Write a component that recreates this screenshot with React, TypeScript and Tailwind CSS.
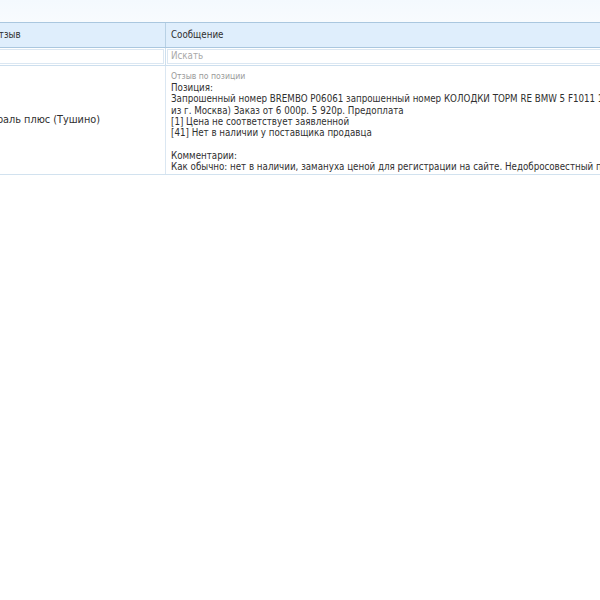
import React from "react";

const font = { fontFamily: '"DejaVu Sans Condensed", "DejaVu Sans", sans-serif' };

export default function App() {
  return (
    <div
      className="w-[600px] h-[600px] bg-white overflow-hidden text-[9.7px] text-[#2f2f2f]"
      style={font}
    >
      <div className="h-[22px] bg-gradient-to-b from-[#f4f9fe] to-[#f8fbfe]" />
      <div className="ml-[-12px] w-[1000px]">
        {/* header */}
        <div className="flex h-[26px] bg-[#dfeefc] border-t border-b border-[#aac7df]">
          <div className="w-[178px] shrink-0 border-r border-[#b8d1e5] flex items-center pl-[4px]">
            Отзыв
          </div>
          <div className="flex-1 flex items-center pl-[5px]">Сообщение</div>
        </div>
        {/* filter */}
        <div className="flex h-[18px] bg-white border-b border-[#cddfee]">
          <div className="w-[178px] shrink-0 border-r border-[#cddfee] p-[1px]">
            <div className="h-full border border-[#dbe7f2]" />
          </div>
          <div className="flex-1 p-[1px]">
            <div className="h-full border border-[#dbe7f2] flex items-center pl-[3px] text-[#a8a8a8]">
              Искать
            </div>
          </div>
        </div>
        {/* row */}
        <div className="flex border-b border-[#d2e2ef]">
          <div className="w-[178px] shrink-0 border-r border-[#dbe7f2] flex items-center justify-end pr-[65px] overflow-hidden whitespace-nowrap text-[10.8px]">
            <span>Автоцентраль плюс (Тушино)</span>
          </div>
          <div className="flex-1 pl-[5px] pt-[5px] pb-[2px] leading-[11.3px] whitespace-nowrap">
            <div className="text-[8.6px] text-[#9a9a9a] leading-[11px]">Отзыв по позиции</div>
            <div>Позиция:</div>
            <div>
              Запрошенный номер BREMBO P06061 запрошенный номер КОЛОДКИ ТОРМ RE BMW 5 F1011 10 3
              (поставщик из г. Москва)
            </div>
            <div>из г. Москва) Заказ от 6 000р. 5 920р. Предоплата</div>
            <div>[1] Цена не соответствует заявленной</div>
            <div>[41] Нет в наличии у поставщика продавца</div>
            <div className="h-[11.3px]" />
            <div>Комментарии:</div>
            <div>
              Как обычно: нет в наличии, заманyха ценой для регистрации на сайте. Недобросовестный продавец.
            </div>
          </div>
        </div>
      </div>
    </div>
  );
}
